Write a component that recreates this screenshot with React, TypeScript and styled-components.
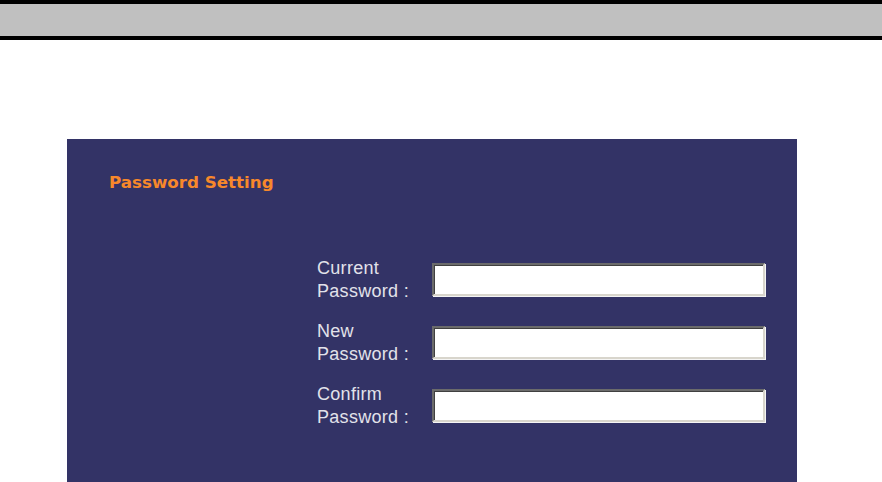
import styled, { createGlobalStyle } from "styled-components"

const GlobalStyle = createGlobalStyle`
  html, body {
    margin: 0;
    padding: 0;
    background: #ffffff;
    font-family: "Liberation Sans", Arial, sans-serif;
  }
`

const TopBar = styled.div`
  height: 40px;
  box-sizing: border-box;
  background-color: #c0c0c0;
  border-top: 4px solid #000000;
  border-bottom: 4px solid #000000;
`

const Panel = styled.div`
  margin: 99px 0 0 67px;
  width: 730px;
  height: 343px;
  box-sizing: border-box;
  background-color: #333366;
  padding: 33px 0 0 42px;
`

const Title = styled.div`
  font-family: "DejaVu Sans", Verdana, sans-serif;
  font-weight: bold;
  font-size: 16.7px;
  line-height: 20px;
  color: #f7882b;
`

const Form = styled.div`
  margin: 56px 0 0 208px;
  display: flex;
  flex-direction: column;
`

const Row = styled.div`
  height: 63px;
  display: flex;
  align-items: center;
`

const Label = styled.label`
  width: 115px;
  font-size: 18px;
  line-height: 23px;
  letter-spacing: 0.3px;
  color: #e2e2ea;
`

const Field = styled.input`
  width: 333px;
  height: 33px;
  box-sizing: border-box;
  margin: 0;
  padding: 0 4px;
  background: #ffffff;
  border-top: 2px solid #6b6b6b;
  border-left: 2px solid #6b6b6b;
  border-bottom: 2px solid #d8d5cc;
  border-right: 2px solid #d8d5cc;
  box-shadow: inset 1px 1px 0 #404040, 1px 1px 0 #f4f4f4;
  outline: none;
`

const fields = [
  ["Current", "Password :"],
  ["New", "Password :"],
  ["Confirm", "Password :"],
]

export default function App() {
  return (
    <>
      <GlobalStyle />
      <TopBar />
      <Panel>
        <Title>Password Setting</Title>
        <Form>
          {fields.map(([first, second]) => (
            <Row key={first}>
              <Label>
                {first}
                <br />
                {second}
              </Label>
              <Field type="password" />
            </Row>
          ))}
        </Form>
      </Panel>
    </>
  )
}
